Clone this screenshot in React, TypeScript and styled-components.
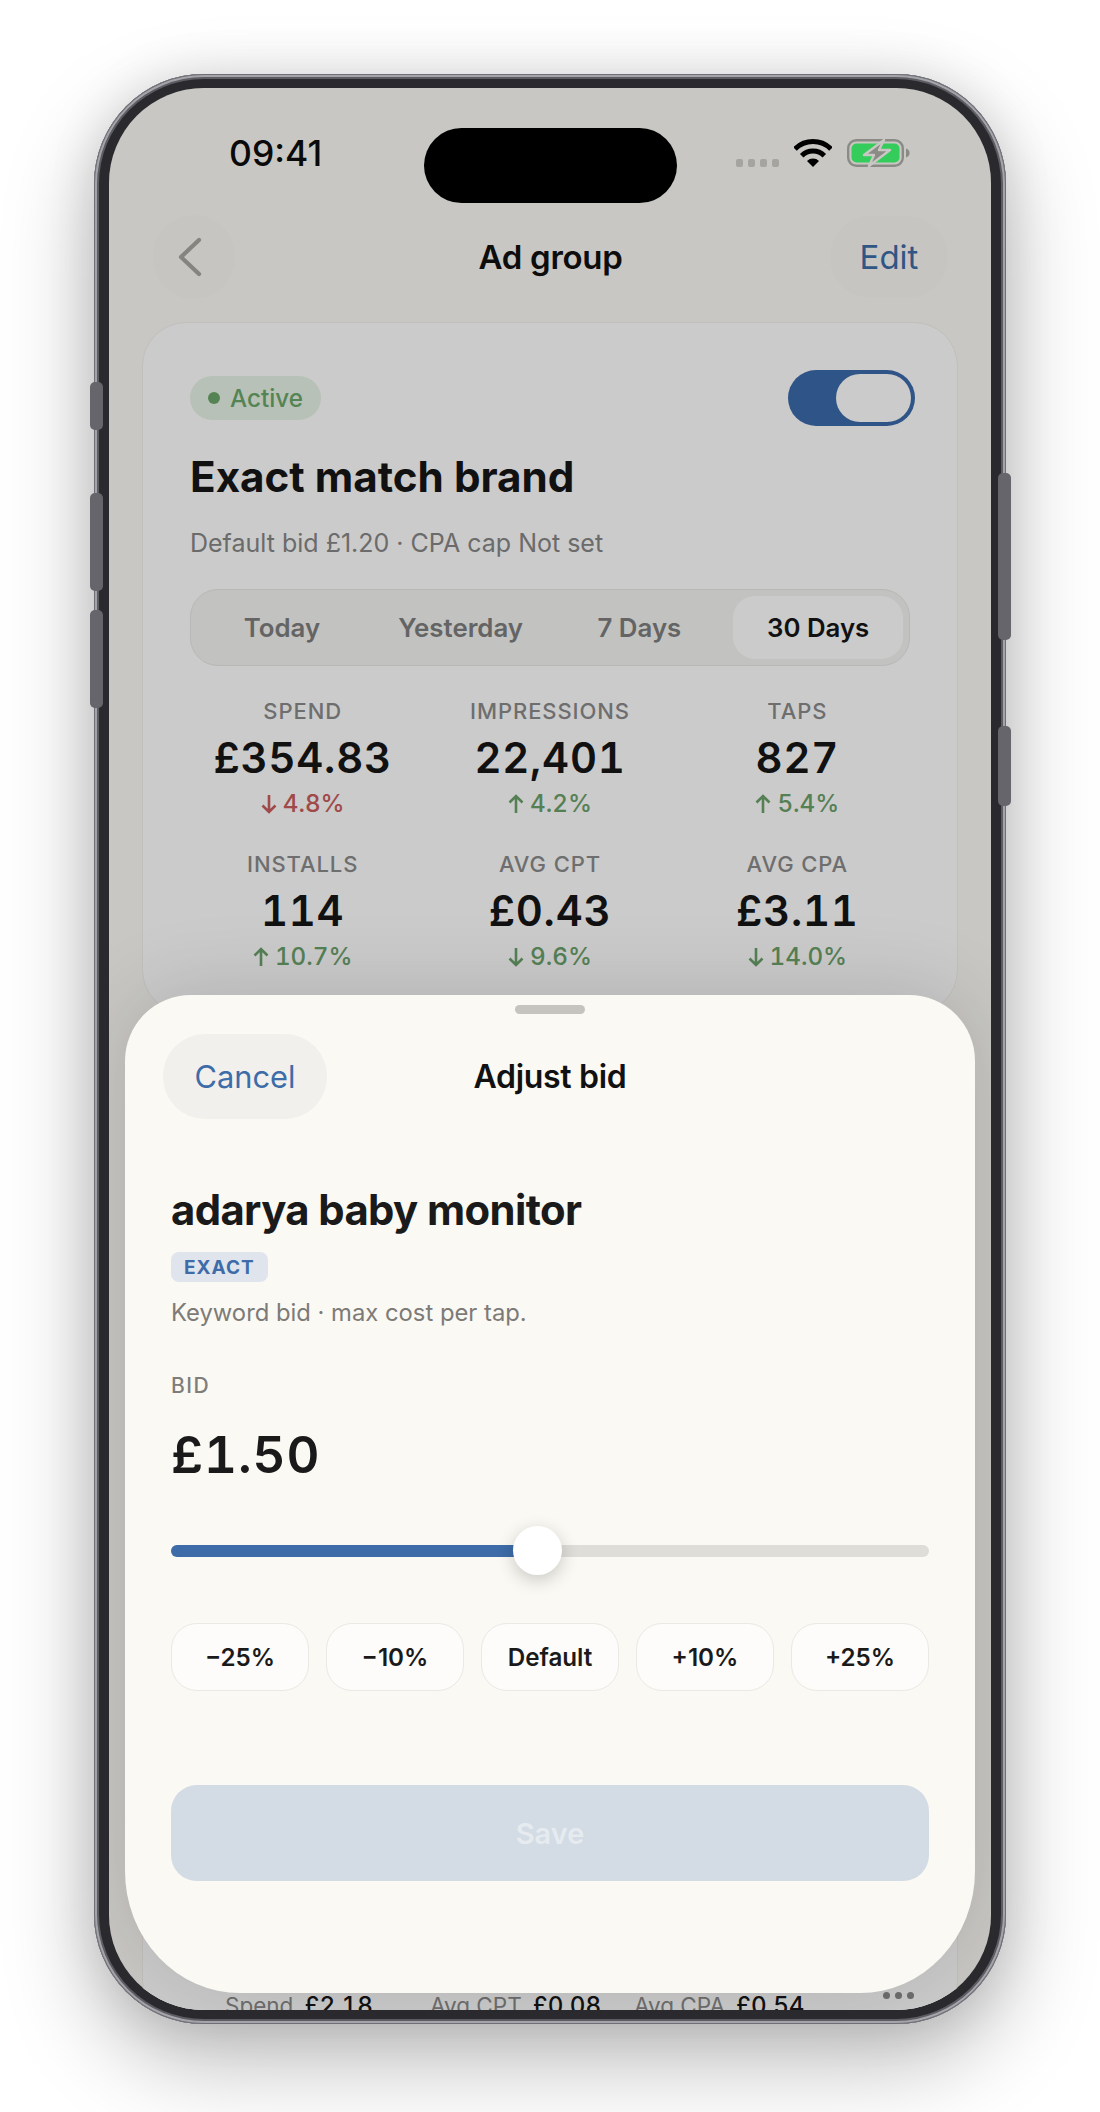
import React, { FC } from 'react';
import styled, { createGlobalStyle } from 'styled-components';

const GlobalStyle = createGlobalStyle`
    * {
        box-sizing: border-box;
    }
    body {
        margin: 0;
        background: #fff;
        font-family: Inter, 'Liberation Sans', sans-serif;
        color: #161616;
    }
`;

const Page = styled.div`
    height: 2112px;
    padding-top: 74px;
    overflow: hidden;
`;
const Phone = styled.div`
    position: relative;
    width: 912px;
    height: 1950px;
    margin: 0 auto;
    padding: 14px 15px;
    border-radius: 110px;
    background: #2a2a2e;
    box-shadow: inset 0 0 0 1px #6e6e76, inset 0 0 0 3px #a4a4aa, inset 0 0 0 5px #5c5c63,
        0 36px 90px rgba(0, 0, 0, 0.28), 0 0 50px rgba(0, 0, 0, 0.1);
`;
const SideButton = styled.div<{ $side: 'left' | 'right'; $top: number; $height: number }>`
    position: absolute;
    ${({ $side }) => ($side === 'left' ? 'left: -4px;' : 'right: -5px;')}
    top: ${({ $top }) => $top}px;
    width: 13px;
    height: ${({ $height }) => $height}px;
    border-radius: 5px;
    background: #65656b;
`;
const Screen = styled.div`
    position: relative;
    width: 882px;
    height: 1922px;
    border-radius: 95px;
    overflow: hidden;
    background: #faf9f4;
`;
const StatusBar = styled.div`
    position: relative;
    z-index: 2;
    display: grid;
    grid-template-columns: 1fr 253px 1fr;
    height: 125px;
`;
const Time = styled.div`
    padding: 44px 0 0 120px;
    font-size: 35.5px;
    line-height: 44px;
    font-weight: 500;
    color: #0a0a0a;
`;
const Island = styled.div`
    width: 253px;
    height: 75px;
    margin-top: 40px;
    border-radius: 38px;
    background: #000;
`;
const StatusIcons = styled.div`
    display: flex;
    align-items: flex-start;
    justify-content: flex-end;
    padding: 51px 81px 0 0;
`;
const SignalDots = styled.div`
    display: flex;
    gap: 5px;
    margin: 20px 15px 0 0;
`;
const SignalDot = styled.span`
    width: 7px;
    height: 8px;
    border-radius: 2px;
    background: #a5a49f;
`;
const BatteryIcon = styled.svg`
    margin-left: 15px;
`;
const Nav = styled.div`
    display: grid;
    grid-template-columns: 1fr auto 1fr;
    align-items: center;
    height: 84px;
    margin-top: 2px;
    padding: 0 43px 0 44px;
`;
const BackButton = styled.button`
    justify-self: start;
    display: flex;
    align-items: center;
    justify-content: center;
    width: 82px;
    height: 84px;
    padding: 0 9px 0 0;
    border: 0;
    border-radius: 42px;
    background: #f9f7f3;
`;
const NavTitle = styled.div`
    font-size: 33px;
    font-weight: 600;
    letter-spacing: -0.3px;
    color: #111;
`;
const EditButton = styled.button`
    justify-self: end;
    width: 118px;
    height: 82px;
    padding: 0;
    border: 0;
    border-radius: 41px;
    background: #f9f7f3;
    font-family: inherit;
    font-size: 33px;
    color: #3d6ca8;
`;
const Card = styled.section`
    margin: 23px 33px 0;
    padding: 53px 47px 41px;
    border: 1px solid #f0efea;
    border-radius: 44px;
    background: #fefefe;
`;
const CardTop = styled.div`
    display: flex;
    align-items: center;
    justify-content: space-between;
    height: 44px;
`;
const StatusPill = styled.div`
    display: flex;
    align-items: center;
    gap: 10px;
    height: 44px;
    padding: 0 18px;
    border-radius: 22px;
    background: #e6f2e5;
    font-size: 24.2px;
    font-weight: 500;
    color: #6ba66a;
`;
const StatusDot = styled.span`
    width: 12px;
    height: 12px;
    border-radius: 50%;
    background: #6ba66a;
`;
const Toggle = styled.div`
    display: flex;
    justify-content: flex-end;
    width: 127px;
    height: 56px;
    margin-right: -5px;
    padding: 4px;
    border-radius: 28px;
    background: #3b6aa9;
`;
const ToggleKnob = styled.div`
    width: 75px;
    height: 48px;
    border-radius: 24px;
    background: #fefefe;
`;
const Title = styled.h1`
    margin: 32px 0 0;
    font-size: 42.2px;
    line-height: 50px;
    font-weight: 700;
    color: #161616;
`;
const Subtitle = styled.div`
    margin-top: 23px;
    font-size: 25px;
    line-height: 36px;
    color: #868686;
`;
const Segments = styled.div`
    display: grid;
    grid-template-columns: repeat(4, 1fr);
    gap: 9px;
    height: 77px;
    margin-top: 28px;
    padding: 6px;
    border: 1px solid #e6e6e4;
    border-radius: 28px;
    background: #f3f3f1;
`;
const Segment = styled.div<{ $active?: boolean }>`
    display: flex;
    align-items: center;
    justify-content: center;
    border-radius: 22px;
    font-size: 25.8px;
    font-weight: 600;
    color: ${({ $active }) => ($active ? '#161616' : '#7e7e7e')};
    background: ${({ $active }) => ($active ? '#fefefe' : 'transparent')};
`;
const Metrics = styled.div`
    display: grid;
    grid-template-columns: repeat(3, 1fr);
    gap: 31px 22px;
    margin-top: 31px;
`;
const Metric = styled.div`
    display: flex;
    flex-direction: column;
    align-items: center;
`;
const MetricLabel = styled.div`
    font-size: 22px;
    line-height: 28px;
    font-weight: 500;
    letter-spacing: 0.9px;
    color: #8a8a8a;
`;
const MetricValue = styled.div`
    margin-top: 8px;
    font-size: 41.8px;
    line-height: 50px;
    font-weight: 560;
    letter-spacing: 0.8px;
    font-variant-numeric: tabular-nums;
    color: #161616;
`;
const MetricDelta = styled.div<{ $bad?: boolean }>`
    display: flex;
    align-items: center;
    gap: 6px;
    margin-top: 6px;
    font-size: 24.2px;
    line-height: 30px;
    font-weight: 500;
    font-variant-numeric: tabular-nums;
    color: ${({ $bad }) => ($bad ? '#c85c5c' : '#6ba06a')};
`;
const KeywordCard = styled.section`
    position: relative;
    margin: 22px 33px 0;
    padding: 951px 0 0 82px;
    border: 1px solid #f0efea;
    border-radius: 44px;
    background: #fefefe;
`;
const KeywordStats = styled.div`
    display: grid;
    grid-template-columns: 205px 204px auto;
    font-size: 22.5px;
    line-height: 36px;
    color: #8a8a8a;
`;
const KeywordStat = styled.div`
    b {
        margin-left: 11px;
        font-size: 24.2px;
        font-weight: 500;
        font-variant-numeric: tabular-nums;
        color: #161616;
    }
`;
const MoreDots = styled.div`
    position: absolute;
    top: 955px;
    right: 43px;
    display: flex;
    gap: 5px;
`;
const MoreDot = styled.span`
    width: 7px;
    height: 7px;
    border-radius: 50%;
    background: #8a8a8a;
`;
const Scrim = styled.div`
    position: absolute;
    inset: 0;
    z-index: 1;
    background: rgba(0, 0, 0, 0.2);
`;
const Sheet = styled.div`
    position: absolute;
    z-index: 1;
    top: 907px;
    left: 16px;
    right: 16px;
    bottom: 17px;
    padding: 39px 46px 0;
    border-radius: 66px 66px 115px 115px / 66px 66px 122px 122px;
    background: #fbf9f3;
    box-shadow: 0 -6px 80px rgba(0, 0, 0, 0.13);
`;
const Handle = styled.div`
    position: absolute;
    top: 10px;
    left: 50%;
    width: 70px;
    height: 9px;
    margin-left: -35px;
    border-radius: 5px;
    background: #c5c4bf;
`;
const SheetHeader = styled.div`
    display: grid;
    grid-template-columns: 1fr auto 1fr;
    align-items: center;
    margin: 0 -8px;
`;
const CancelButton = styled.button`
    justify-self: start;
    width: 164px;
    height: 85px;
    padding: 0;
    border: 0;
    border-radius: 42px;
    background: #f2f0ed;
    font-family: inherit;
    font-size: 30.8px;
    color: #3d6ca8;
`;
const SheetTitle = styled.div`
    font-size: 32px;
    font-weight: 600;
    letter-spacing: -0.3px;
    color: #111;
`;
const KeywordName = styled.h2`
    margin: 66px 0 0;
    font-size: 41.8px;
    line-height: 50px;
    font-weight: 700;
    letter-spacing: -0.6px;
    color: #1a1a1a;
`;
const MatchTag = styled.div`
    display: inline-flex;
    align-items: center;
    height: 30px;
    margin-top: 17px;
    padding: 0 13px;
    border-radius: 8px;
    background: #e0e4ec;
    font-size: 19px;
    font-weight: 700;
    letter-spacing: 1px;
    color: #3d6ca8;
`;
const Hint = styled.div`
    margin-top: 14px;
    font-size: 23.8px;
    line-height: 34px;
    color: #7d7b78;
`;
const BidLabel = styled.div`
    margin-top: 42px;
    font-size: 21px;
    line-height: 28px;
    font-weight: 500;
    letter-spacing: 1.5px;
    color: #7f7d7a;
`;
const BidValue = styled.div`
    margin-top: 25px;
    font-size: 51px;
    line-height: 60px;
    font-weight: 560;
    letter-spacing: 0.9px;
    font-variant-numeric: tabular-nums;
    color: #1a1a1a;
`;
const Track = styled.div`
    position: relative;
    height: 12px;
    margin-top: 60px;
    border-radius: 6px;
    background: #dfddd8;
`;
const TrackFill = styled.div`
    height: 100%;
    border-radius: 6px;
    background: #3d6ca8;
`;
const Knob = styled.div`
    position: absolute;
    top: -19px;
    width: 49px;
    height: 49px;
    margin-left: -24px;
    border-radius: 50%;
    background: #fff;
    box-shadow: 0 5px 18px rgba(0, 0, 0, 0.2);
`;
const Chips = styled.div`
    display: grid;
    grid-template-columns: repeat(5, 1fr);
    gap: 17px;
    margin-top: 66px;
`;
const Chip = styled.button`
    height: 68px;
    padding: 0;
    border: 1px solid #ebe9e5;
    border-radius: 26px;
    background: #fdfcfa;
    font-family: inherit;
    font-size: 24.2px;
    font-weight: 600;
    color: #1a1a1a;
`;
const SaveButton = styled.button`
    display: block;
    width: 100%;
    height: 96px;
    margin-top: 94px;
    padding: 0;
    border: 0;
    border-radius: 26px;
    background: #d3dbe4;
    font-family: inherit;
    font-size: 29px;
    font-weight: 600;
    color: #e6ebf0;
`;

const metrics = [
    { label: 'SPEND', value: '£354.83', delta: '4.8%', up: false, bad: true },
    { label: 'IMPRESSIONS', value: '22,401', delta: '4.2%', up: true },
    { label: 'TAPS', value: '827', delta: '5.4%', up: true },
    { label: 'INSTALLS', value: '114', delta: '10.7%', up: true },
    { label: 'AVG CPT', value: '£0.43', delta: '9.6%', up: false },
    { label: 'AVG CPA', value: '£3.11', delta: '14.0%', up: false },
];

const DeltaArrow: FC<{ up: boolean }> = ({ up }) => (
    <svg width="16" height="20" viewBox="0 0 16 20" fill="none" stroke="currentColor" strokeWidth="2.6">
        {up ? <path d="M8 19V2M1.5 8.5 8 2l6.5 6.5" /> : <path d="M8 1v17M1.5 11.5 8 18l6.5-6.5" />}
    </svg>
);

const WifiIcon = () => (
    <svg width="38" height="28" viewBox="0 0 38 28">
        <path d="M1 10a25.5 25.5 0 0 1 36 0" fill="none" stroke="#000" strokeWidth="5" />
        <path d="M7.7 16.7a16 16 0 0 1 22.6 0" fill="none" stroke="#000" strokeWidth="5" />
        <path d="M19 28 13 22a8.5 8.5 0 0 1 12 0z" fill="#000" />
    </svg>
);

const Battery = () => (
    <BatteryIcon width="63" height="28" viewBox="0 0 63 28">
        <rect x="1.2" y="1.2" width="54.6" height="25.6" rx="8" fill="none" stroke="#8b8b86" strokeWidth="2.4" />
        <rect x="4.5" y="4.5" width="48" height="19" rx="5" fill="#34cc5a" />
        <path d="M59 9.5c2.4.6 3.6 2.4 3.6 4.5s-1.2 3.9-3.6 4.5z" fill="#8b8b86" />
        <path
            d="M37 1 17 16h10l-5 11 21-16H32z"
            fill="#8b8b86"
            stroke="#c8c7c3"
            strokeWidth="2.4"
            strokeLinejoin="round"
        />
    </BatteryIcon>
);

const BID_PERCENT = 48.3;

export default function App() {
    return (
        <Page>
            <GlobalStyle />
            <Phone>
                <SideButton $side="left" $top={308} $height={48} />
                <SideButton $side="left" $top={419} $height={98} />
                <SideButton $side="left" $top={536} $height={98} />
                <SideButton $side="right" $top={399} $height={167} />
                <SideButton $side="right" $top={652} $height={80} />
                <Screen>
                    <StatusBar>
                        <Time>09:41</Time>
                        <Island />
                        <StatusIcons>
                            <SignalDots>
                                <SignalDot />
                                <SignalDot />
                                <SignalDot />
                                <SignalDot />
                            </SignalDots>
                            <WifiIcon />
                            <Battery />
                        </StatusIcons>
                    </StatusBar>
                    <Nav>
                        <BackButton aria-label="Back">
                            <svg width="24" height="40" viewBox="0 0 24 40" fill="none" stroke="#a8a59f" strokeWidth="4.2" strokeLinecap="round" strokeLinejoin="round">
                                <path d="M21 3 3 20l18 17" />
                            </svg>
                        </BackButton>
                        <NavTitle>Ad group</NavTitle>
                        <EditButton>Edit</EditButton>
                    </Nav>
                    <Card>
                        <CardTop>
                            <StatusPill>
                                <StatusDot />
                                Active
                            </StatusPill>
                            <Toggle>
                                <ToggleKnob />
                            </Toggle>
                        </CardTop>
                        <Title>Exact match brand</Title>
                        <Subtitle>Default bid £1.20 · CPA cap Not set</Subtitle>
                        <Segments>
                            <Segment>Today</Segment>
                            <Segment>Yesterday</Segment>
                            <Segment>7 Days</Segment>
                            <Segment $active>30 Days</Segment>
                        </Segments>
                        <Metrics>
                            {metrics.map((m) => (
                                <Metric key={m.label}>
                                    <MetricLabel>{m.label}</MetricLabel>
                                    <MetricValue>{m.value}</MetricValue>
                                    <MetricDelta $bad={m.bad}>
                                        <DeltaArrow up={m.up} />
                                        {m.delta}
                                    </MetricDelta>
                                </Metric>
                            ))}
                        </Metrics>
                    </Card>
                    <KeywordCard>
                        <MoreDots>
                            <MoreDot />
                            <MoreDot />
                            <MoreDot />
                        </MoreDots>
                        <KeywordStats>
                            <KeywordStat>
                                Spend<b>£2.18</b>
                            </KeywordStat>
                            <KeywordStat>
                                Avg CPT<b>£0.08</b>
                            </KeywordStat>
                            <KeywordStat>
                                Avg CPA<b>£0.54</b>
                            </KeywordStat>
                        </KeywordStats>
                    </KeywordCard>
                    <Scrim />
                    <Sheet>
                        <Handle />
                        <SheetHeader>
                            <CancelButton>Cancel</CancelButton>
                            <SheetTitle>Adjust bid</SheetTitle>
                        </SheetHeader>
                        <KeywordName>adarya baby monitor</KeywordName>
                        <MatchTag>EXACT</MatchTag>
                        <Hint>Keyword bid · max cost per tap.</Hint>
                        <BidLabel>BID</BidLabel>
                        <BidValue>£1.50</BidValue>
                        <Track>
                            <TrackFill style={{ width: `${BID_PERCENT}%` }} />
                            <Knob style={{ left: `${BID_PERCENT}%` }} />
                        </Track>
                        <Chips>
                            <Chip>−25%</Chip>
                            <Chip>−10%</Chip>
                            <Chip>Default</Chip>
                            <Chip>+10%</Chip>
                            <Chip>+25%</Chip>
                        </Chips>
                        <SaveButton>Save</SaveButton>
                    </Sheet>
                </Screen>
            </Phone>
        </Page>
    );
}
